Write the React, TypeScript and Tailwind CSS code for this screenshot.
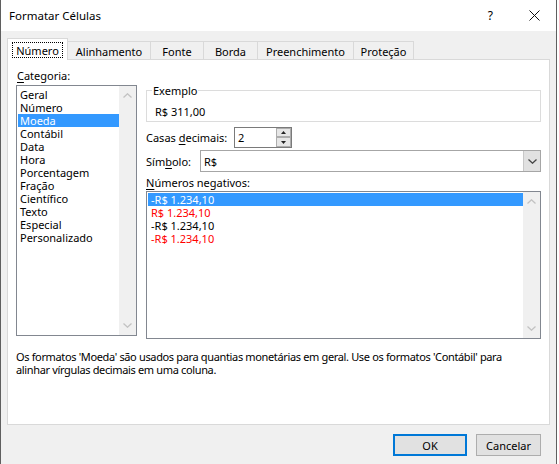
const font = "font-['Segoe_UI','Noto_Sans',sans-serif]";

function Chevron({ up, color = "#c2c2c2" }: { up?: boolean; color?: string }) {
  return (
    <svg width="9" height="5" viewBox="0 0 9 5" className="block">
      <polyline
        points={up ? "0.5,4.5 4.5,0.8 8.5,4.5" : "0.5,0.5 4.5,4.2 8.5,0.5"}
        fill="none"
        stroke={color}
        strokeWidth="1.3"
      />
    </svg>
  );
}

function ScrollBar() {
  return (
    <div className="w-[17px] shrink-0 bg-[#f0f0f0] flex flex-col justify-between items-center py-[7px]">
      <Chevron up />
      <Chevron />
    </div>
  );
}

const categorias = [
  "Geral",
  "Número",
  "Moeda",
  "Contábil",
  "Data",
  "Hora",
  "Porcentagem",
  "Fração",
  "Científico",
  "Texto",
  "Especial",
  "Personalizado",
];

const negativos = [
  { t: "-R$ 1.234,10", c: "text-black", sel: true },
  { t: "R$ 1.234,10", c: "text-[#ff0000]" },
  { t: "-R$ 1.234,10", c: "text-black" },
  { t: "-R$ 1.234,10", c: "text-[#ff0000]" },
];

const tabs = [
  { label: "Alinhamento", w: "w-[83px]" },
  { label: "Fonte", w: "w-[53px]" },
  { label: "Borda", w: "w-[54px]" },
  { label: "Preenchimento", w: "w-[96px]" },
  { label: "Proteção", w: "w-[60px]" },
];

export default function App() {
  return (
    <div className={`w-[559px] h-[464px] bg-white flex text-[11px] leading-[13px] text-black whitespace-nowrap ${font}`}>
      <div className="w-[557px] h-[464px] border-l border-r border-[#5f5f5f] bg-[#f0f0f0] flex flex-col">
        {/* title bar */}
        <div className="h-[31px] bg-white flex items-center pl-[8px] pr-[16px] shrink-0">
          <span className="text-[11.5px] pb-[1px]">Formatar Células</span>
          <span className="ml-auto mr-[36px] text-[12px]">?</span>
          <svg width="11" height="11" viewBox="0 0 11 11">
            <path d="M0.5 0.5 L10.5 10.5 M10.5 0.5 L0.5 10.5" stroke="#111" strokeWidth="1" />
          </svg>
        </div>

        {/* tabs */}
        <div className="pl-[6px] pt-[7px] flex items-end h-[28px] shrink-0">
          <div className="relative z-10 -mb-px h-[22px] w-[61px] bg-white border-l border-t border-r border-[#d9d9d9] flex items-end justify-center">
            <span className="h-[16px] px-[3px] mb-[2px] border border-dotted border-black leading-[15px]">Número</span>
          </div>
          {tabs.map((t) => (
            <div
              key={t.label}
              className={`${t.w} h-[18px] border-t border-r border-[#d9d9d9] bg-[#f0f0f0] flex items-end justify-center pb-[1px]`}
            >
              {t.label}
            </div>
          ))}
        </div>

        {/* panel */}
        <div className="ml-[6px] w-[543px] h-[366px] bg-white border border-[#d9d9d9] shrink-0 flex flex-col">
          <div className="flex pl-[8px]">
            {/* left column */}
            <div className="w-[121px] shrink-0">
              <div className="mt-[9px] pl-[1px]">
                <span className="underline underline-offset-2">C</span>ategoria:
              </div>
              <div className="mt-[3px] h-[251px] border border-[#828790] flex">
                <div className="flex-1 pt-[2px] pl-[1px]">
                  {categorias.map((c) => (
                    <div
                      key={c}
                      className={`h-[13px] px-[2px] ${c === "Moeda" ? "bg-[#3399ff] text-white" : ""}`}
                    >
                      {c}
                    </div>
                  ))}
                </div>
                <ScrollBar />
              </div>
            </div>

            {/* right column */}
            <div className="ml-[9px] w-[395px] shrink-0">
              <fieldset className="mt-[24px] w-[395px] border border-[#dcdcdc] px-[8px] pb-[3px]">
                <legend className="px-[1px] -ml-[3px] leading-[13px]">Exemplo</legend>
                <div className="pt-[8px]">R$ 311,00</div>
              </fieldset>

              <div className="mt-[5px] flex items-center h-[21px]">
                <div className="w-[88px]">
                  Casas <span className="underline underline-offset-2">d</span>ecimais:
                </div>
                <div className="w-[58px] h-[21px] border border-[#7a7a7a] bg-white flex items-center">
                  <span className="pl-[3px] flex-1">2</span>
                  <div className="w-[15px] h-[19px] flex flex-col">
                    <div className="h-[9px] bg-[#e6e6e6] border border-[#adadad] flex items-center justify-center">
                      <svg width="5" height="3" viewBox="0 0 5 3">
                        <path d="M0 3 L2.5 0 L5 3 Z" fill="#222" />
                      </svg>
                    </div>
                    <div className="h-[10px] bg-[#e6e6e6] border border-[#adadad] flex items-center justify-center">
                      <svg width="5" height="3" viewBox="0 0 5 3">
                        <path d="M0 0 L2.5 3 L5 0 Z" fill="#222" />
                      </svg>
                    </div>
                  </div>
                </div>
              </div>

              <div className="mt-[2px] flex items-center h-[22px]">
                <div className="w-[54px]">
                  Sím<span className="underline underline-offset-2">b</span>olo:
                </div>
                <div className="w-[341px] h-[22px] border border-[#a6a6a6] bg-white flex items-center">
                  <span className="pl-[3px] flex-1">R$</span>
                  <div className="w-[17px] h-[20px] bg-[#e1e1e1] border-l border-[#c8c8c8] flex items-center justify-center">
                    <Chevron color="#444" />
                  </div>
                </div>
              </div>

              <div className="mt-[4px]">
                <span className="underline underline-offset-2">N</span>úmeros negativos:
              </div>
              <div className="mt-[2px] h-[148px] border border-[#828790] flex">
                <div className="flex-1 pt-[1px] pl-[1px]">
                  {negativos.map((n, i) => (
                    <div
                      key={i}
                      className={`h-[13px] pl-[3px] ${n.sel ? "bg-[#3399ff] text-white" : n.c}`}
                    >
                      {n.t}
                    </div>
                  ))}
                </div>
                <ScrollBar />
              </div>
            </div>
          </div>

          <div className="mt-[11px] pl-[8px] leading-[13px] tracking-[-0.35px]">
            Os formatos 'Moeda' são usados para quantias monetárias em geral. Use os formatos 'Contábil' para
            <br />
            alinhar vírgulas decimais em uma coluna.
          </div>
        </div>

        {/* buttons */}
        <div className="mt-[9px] flex justify-end pr-[15px] gap-[9px]">
          <button className="w-[74px] h-[22px] bg-[#e1e1e1] border-2 border-[#0078d7] leading-[13px]">OK</button>
          <button className="w-[65px] h-[22px] bg-[#e1e1e1] border border-[#adadad] leading-[13px]">Cancelar</button>
        </div>
      </div>
    </div>
  );
}
